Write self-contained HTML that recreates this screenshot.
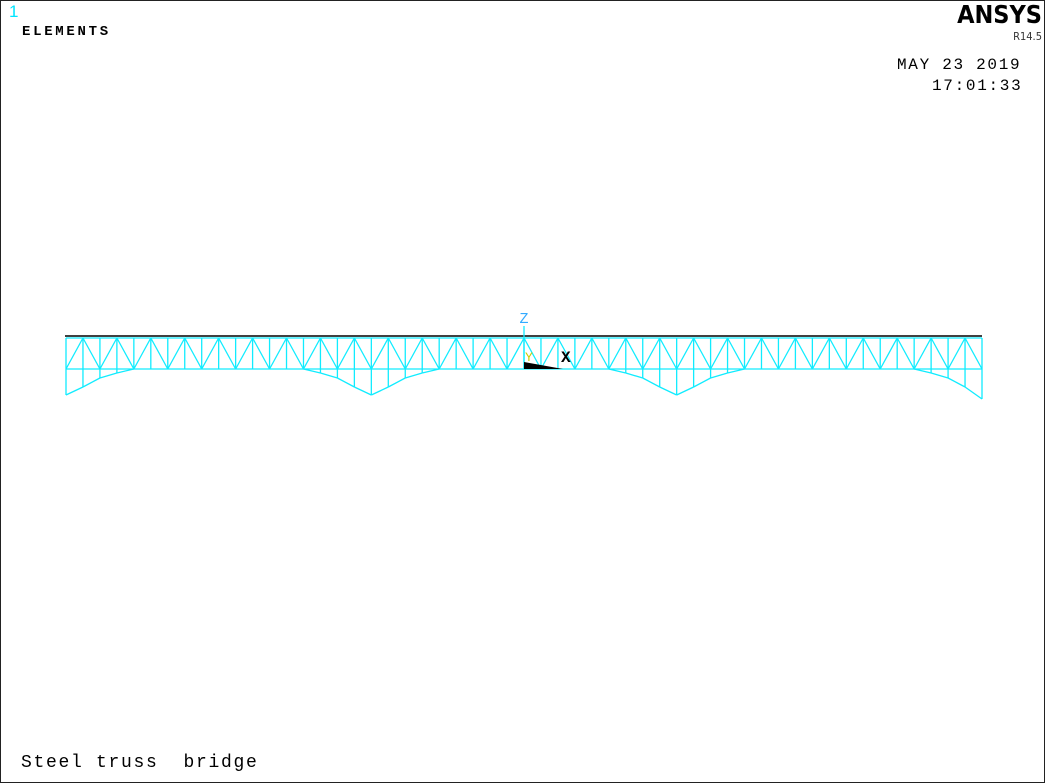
<!DOCTYPE html>
<html><head><style>
html,body{margin:0;padding:0;background:#fff}
#c{position:relative;width:1043px;height:781px;border:1px solid #222;overflow:hidden;font-family:"Liberation Mono",monospace}
.t{position:absolute;white-space:pre}
</style></head><body>
<div id="c">
<div class="t" style="left:8px;top:1px;color:#00e5ff;font-size:17px;font-family:'Liberation Sans',sans-serif">1</div>
<div class="t" style="left:21px;top:23px;font-size:14px;font-weight:bold;letter-spacing:2.7px">ELEMENTS</div>
<div class="t" style="right:2px;top:-1px;font-size:25px;font-weight:bold;font-family:'DejaVu Sans Condensed','Liberation Sans',sans-serif">ANSYS</div>
<div class="t" style="right:2px;top:29px;font-size:11px;font-family:'DejaVu Sans Condensed','Liberation Sans',sans-serif;color:#333">R14.5</div>
<div class="t" style="left:896px;top:55px;font-size:16px;letter-spacing:1.7px">MAY 23 2019</div>
<div class="t" style="left:931px;top:76px;font-size:16px;letter-spacing:1.7px">17:01:33</div>
<div class="t" style="left:20px;top:752px;font-size:18px;letter-spacing:1.7px">Steel truss  bridge</div>
<svg id="s" width="1043" height="781" style="position:absolute;left:0;top:0"></svg>
</div>
<script>
var s=document.getElementById('s'),h='';
var x0=65,x1=981,n=54,d=(x1-x0)/n,yt=337,yb=368;
var ay=[394,386,377,372,368,368,368,368,368,368,368,368,368,368,368,372,377,386,394];
function L(a,b,c,e,col,w){h+='<line x1="'+a+'" y1="'+b+'" x2="'+c+'" y2="'+e+'" stroke="'+(col||'#10ecff')+'" stroke-width="'+(w||1.3)+'"/>';}
L(x0,yt,x1,yt);L(x0,yb,x1,yb);
for(var i=0;i<=n;i++){var x=x0+i*d,y=ay[i%18];if(i==n)y=398;
 L(x,yt,x,Math.max(y,yb));
 if(i%2==1){L(x,yt,x-d,yb);L(x,yt,x+d,yb);}
 if(i<n){var j=i+1,y2=ay[j%18];if(j==n)y2=398;if(y>yb||y2>yb)L(x,y,x+d,y2);}
}
L(x0-1,335,x1,335,'#000',1.6);
h+='<line x1="523" y1="325" x2="523" y2="368" stroke="#10ecff" stroke-width="1.3"/>';
h+='<text x="523" y="322" fill="#33aaff" font-size="15" font-family="Liberation Mono" text-anchor="middle">Z</text>';
h+='<text x="560" y="361" fill="#000" font-size="16" font-family="Liberation Mono" font-weight="bold">X</text>';
h+='<text x="524" y="360" fill="#cccc00" font-size="13" font-family="Liberation Mono">Y</text>';
h+='<polygon points="523,361 523,368 562,368" fill="#000"/>';
s.innerHTML=h;
</script>
</body></html>
